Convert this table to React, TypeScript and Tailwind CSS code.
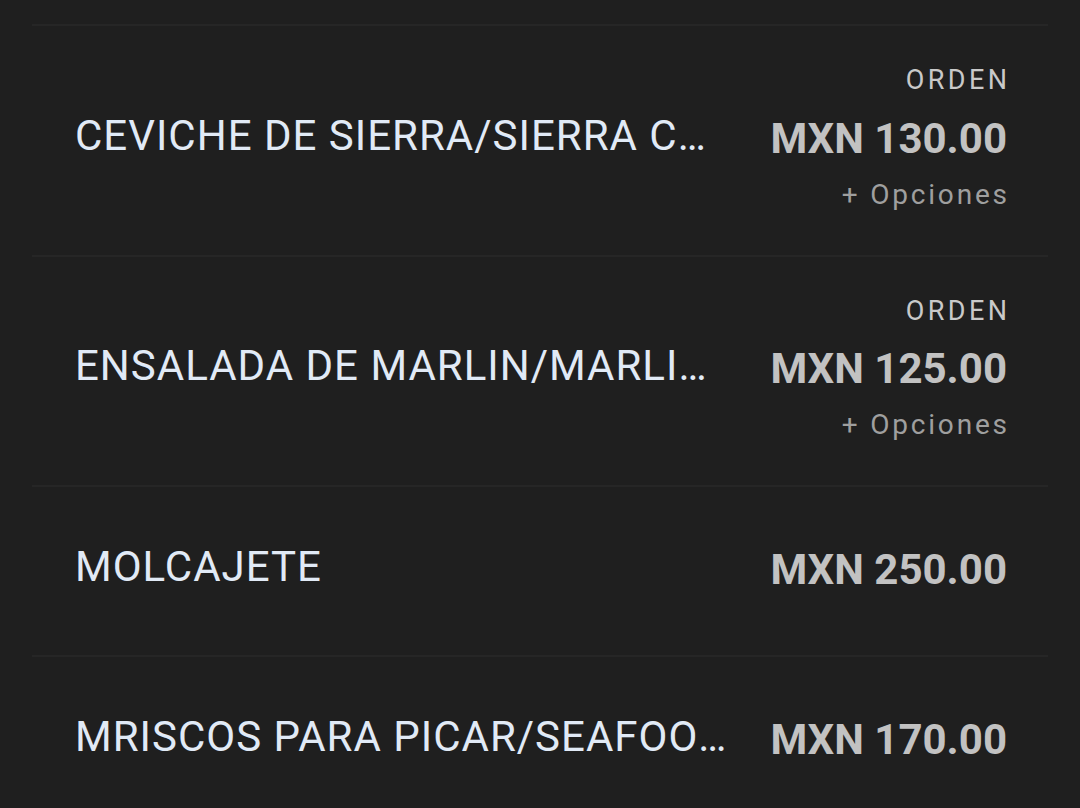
import React from 'react';

type Item = {
  name: string;
  price: string;
  options?: boolean;
};

const items: Item[] = [
  { name: 'CEVICHE DE SIERRA/SIERRA CEVICHE', price: 'MXN 130.00', options: true },
  { name: 'ENSALADA DE MARLIN/MARLIN SALAD', price: 'MXN 125.00', options: true },
  { name: 'MOLCAJETE', price: 'MXN 250.00' },
  { name: 'MRISCOS PARA PICAR/SEAFOOD PLATTER', price: 'MXN 170.00' },
];

const MenuRow = ({ item }: { item: Item }) => {
  return (
    <div
      className={`mx-[32px] border-t-2 border-[#262626] flex items-center gap-[44px] pl-[43px] pr-[41px] pb-[4px] ${
        item.options ? 'h-[230.5px]' : 'h-[170px]'
      }`}
    >
      <p className="flex-1 min-w-0 truncate text-[42px] tracking-[1px] text-[#e1eaf6] pb-[6px]">
        {item.name}
      </p>
      <div className="flex flex-col items-end shrink-0">
        {item.options && (
          <p className="h-[44px] flex items-center text-[27px] tracking-[3.4px] -mr-[3.4px] text-[#c9c9c9]">
            ORDEN
          </p>
        )}
        <p className="h-[72px] flex items-center text-[42px] font-bold text-[#c2c2c2]">{item.price}</p>
        {item.options && (
          <p className="h-[44px] flex items-center text-[28px] tracking-[2.8px] -mr-[2.8px] pb-[3px] text-[#9f9f9f]">
            + Opciones
          </p>
        )}
      </div>
    </div>
  );
};

export default function App() {
  return (
    <div className="w-[1080px] h-[808px] overflow-hidden bg-[#1f1f1f] pt-[24px] font-['Roboto',sans-serif]">
      {items.map((item) => (
        <MenuRow key={item.name} item={item} />
      ))}
    </div>
  );
}
